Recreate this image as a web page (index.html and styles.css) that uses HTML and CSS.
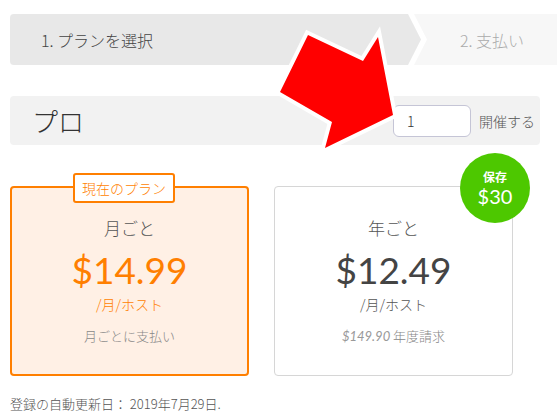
FILE: index.html
```
<!DOCTYPE html>
<html lang="ja">
<head>
<meta charset="utf-8">
<link rel="stylesheet" href="styles.css">
</head>
<body>
<div class="page">
  <div class="steps">
    <div class="step-one-wrap"><div class="step-one">1. プランを選択</div></div>
    <div class="step-two">2. 支払い</div>
  </div>

  <div class="plan-head">
    <div class="plan-name">プロ</div>
    <div class="hosts">
      <input class="host-input" type="text" value="1">
      <span class="hosts-label">開催する</span>
    </div>
  </div>

  <div class="cards">
    <div class="card card-current">
      <div class="badge">現在のプラン</div>
      <div class="card-title">月ごと</div>
      <div class="price">$14.99</div>
      <div class="per">/月/ホスト</div>
      <div class="note">月ごとに支払い</div>
    </div>
    <div class="card card-year">
      <div class="save"><span class="save-label">保存</span><span class="save-amt">$30</span></div>
      <div class="card-title">年ごと</div>
      <div class="price">$12.49</div>
      <div class="per">/月/ホスト</div>
      <div class="note"><em class="note-amt">$149.90</em> 年度請求</div>
    </div>
  </div>

  <div class="renew">登録の自動更新日： 2019年7月29日.</div>
</div>

<svg class="arrow" width="557" height="419" viewBox="0 0 557 419">
  <polygon points="308,35 363,61 378,37 393,115 325,148 332,122 280,92" fill="#ff0000" stroke="#ffffff" stroke-width="8" stroke-linejoin="miter" stroke-miterlimit="10" paint-order="stroke"/>
</svg>
</body>
</html>
```
FILE: styles.css
```
html, body {
  margin: 0;
  padding: 0;
  background: #fff;
}
body {
  width: 557px;
  height: 419px;
  overflow: hidden;
  position: relative;
  font-family: "Noto Sans CJK JP", Lato, sans-serif;
  font-weight: 300;
  color: #444;
}
.page {
  padding: 14px 0 0 10px;
}
.steps {
  display: flex;
  height: 51px;
  background: #f7f7f7;
  border-radius: 4px 0 0 4px;
  overflow: hidden;
}
.step-one-wrap {
  width: 417px;
  flex: none;
  background: #fff;
  clip-path: polygon(0 0, 404px 0, 417px 50%, 404px 100%, 0 100%);
  margin-right: -5px;
}
.step-one {
  width: 411px;
  height: 51px;
  background: #e8e8e8;
  clip-path: polygon(0 0, 398px 0, 411px 50%, 398px 100%, 0 100%);
  display: flex;
  align-items: center;
  padding-left: 31px;
  box-sizing: border-box;
  font-size: 16px;
  color: #444;
}
.step-two {
  display: flex;
  align-items: center;
  padding-left: 38px;
  font-size: 16px;
  color: #aaa;
}
.plan-head {
  margin-top: 31px;
  width: 530px;
  height: 49px;
  background: #f2f2f2;
  border-radius: 4px;
  display: flex;
  align-items: center;
  justify-content: space-between;
  box-sizing: border-box;
  padding: 0 5px 0 22px;
}
.plan-name {
  font-size: 26px;
  color: #333;
}
.hosts {
  display: flex;
  align-items: center;
  gap: 8px;
}
.host-input {
  width: 78px;
  height: 32px;
  box-sizing: border-box;
  border: 1px solid #c5c5d6;
  border-radius: 6px;
  background: #fff;
  padding: 0 0 0 13px;
  font-family: "Noto Sans CJK JP", Lato, sans-serif;
  font-weight: 300;
  font-size: 14px;
  color: #333;
  outline: none;
}
.hosts-label {
  font-size: 14px;
  color: #555;
}
.cards {
  margin-top: 41px;
  display: flex;
  gap: 25px;
}
.card {
  position: relative;
  width: 239px;
  height: 190px;
  box-sizing: border-box;
  border-radius: 4px;
  display: flex;
  flex-direction: column;
  align-items: center;
  text-align: center;
}
.card-current {
  border: 2px solid #ff7f00;
  background: #fff0e5;
  padding-top: 30px;
}
.card-year {
  border: 1px solid #d6d6d6;
  background: #fff;
  padding-top: 31px;
}
.badge {
  position: absolute;
  top: -15px;
  left: 61px;
  height: 30px;
  box-sizing: border-box;
  border: 2px solid #ff7f00;
  border-radius: 3px;
  background: #fff;
  color: #ff7f00;
  font-size: 14px;
  line-height: 26px;
  padding: 0 7px;
}
.card-title {
  font-size: 17px;
  line-height: 20px;
  color: #555;
}
.price {
  margin-top: 10px;
  font-family: Lato, sans-serif;
  font-weight: 400;
  font-size: 37px;
  line-height: 44px;
  color: #444;
}
.card-current .price,
.card-current .per {
  color: #ff7f00;
}
.per {
  margin-top: 3px;
  font-size: 14px;
  line-height: 18px;
  color: #555;
}
.note {
  margin-top: 14px;
  font-size: 13px;
  line-height: 18px;
  color: #888;
}
.note-amt {
  font-family: Lato, sans-serif;
  font-weight: 400;
  font-style: italic;
  color: #999;
}
.save {
  position: absolute;
  top: -34px;
  left: 185px;
  width: 70px;
  height: 70px;
  border-radius: 50%;
  background: #4dc800;
  color: #fff;
  display: flex;
  flex-direction: column;
  align-items: center;
  justify-content: center;
}
.save-label {
  font-size: 12px;
  font-weight: bold;
  line-height: 14px;
}
.save-amt {
  font-family: Lato, sans-serif;
  font-weight: 400;
  font-size: 20px;
  line-height: 22px;
  margin-top: 1px;
}
.renew {
  margin-top: 19px;
  font-size: 13px;
  line-height: 18px;
  color: #555;
}
.arrow {
  position: absolute;
  top: 0;
  left: 0;
  pointer-events: none;
}
```
